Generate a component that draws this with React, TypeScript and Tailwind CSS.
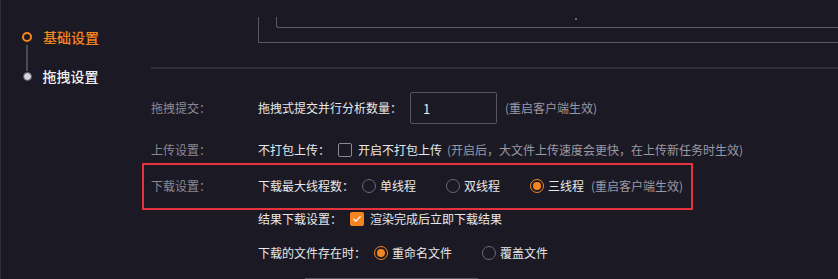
import React from 'react';

const Radio: React.FC<{ checked?: boolean }> = ({ checked }) =>
  checked ? (
    <span className="flex h-[14px] w-[14px] shrink-0 items-center justify-center rounded-full border-[1.5px] border-[#f5861f]">
      <span className="h-[8px] w-[8px] rounded-full bg-[#f5861f]" />
    </span>
  ) : (
    <span className="h-[14px] w-[14px] shrink-0 rounded-full border border-[#6a6975]" />
  );

const Checkbox: React.FC<{ checked?: boolean }> = ({ checked }) =>
  checked ? (
    <span className="flex h-[14px] w-[14px] shrink-0 items-center justify-center rounded-[2px] bg-[#f5861f]">
      <svg viewBox="0 0 12 12" className="h-[10px] w-[10px]" fill="none" stroke="#fff" strokeWidth="1.6">
        <path d="M2.2 6.2 4.8 8.6 9.8 3.2" strokeLinecap="round" strokeLinejoin="round" />
      </svg>
    </span>
  ) : (
    <span className="h-[14px] w-[14px] shrink-0 rounded-[2px] border border-[#8a8995]" />
  );

const RadioOption: React.FC<{ label: string; checked?: boolean }> = ({ label, checked }) => (
  <div className="flex items-center gap-[4px]">
    <Radio checked={checked} />
    <span className="text-[#e8e8ea]">{label}</span>
  </div>
);

export default function App() {
  return (
    <div
      className="flex h-[279px] w-[838px] overflow-hidden border-l border-[#2f2e3a] bg-[#1b1a24] text-[12px] leading-none"
      style={{ fontFamily: '"Noto Sans CJK SC", "Microsoft YaHei", sans-serif' }}
    >
      {/* side nav */}
      <div className="w-[150px] shrink-0 pt-[29px]">
        <div className="flex h-[16px] items-center">
          <span className="ml-[21px] h-[10px] w-[10px] rounded-full border-2 border-[#f5861f]" />
          <span className="ml-[11px] text-[14px] font-medium text-[#f5861f]">基础设置</span>
        </div>
        <div className="ml-[25px] h-[26px] w-[2px] bg-[#4a4955]" />
        <div className="flex h-[10px] items-center">
          <span className="ml-[21.5px] h-[9px] w-[9px] rounded-full border border-[#55545f] bg-[#d4d4d8]" />
          <span className="ml-[11px] text-[14px] font-medium text-[#f0f0f2]">拖拽设置</span>
        </div>
      </div>

      {/* content */}
      <div className="flex-1">
        <div className="pl-[107px] pt-[17px]">
          <div className="relative h-[26px] border-b border-l border-[#5a5966] pl-[17px]">
            <div className="h-[11px] rounded-bl-[3px] border-b border-l border-[#5a5966]" />
            <span className="absolute left-[316px] top-[1px] h-[2px] w-[2px] bg-[#6a6975]" />
          </div>
        </div>

        <div className="mt-[24px] h-[2px] bg-[#302f3b]" />

        {/* row 1 */}
        <div className="mt-[23px] flex h-[32px] items-center">
          <span className="w-[107px] text-[#8a8995]">拖拽提交：</span>
          <span className="mr-[8px] text-[#e8e8ea]">拖拽式提交并行分析数量：</span>
          <div className="flex h-[32px] w-[87px] items-center rounded-[2px] border border-[#55545f] pl-[12px] text-[13px] text-[#e8e8ea]">
            1
          </div>
          <span className="ml-[8px] text-[#9a99a4]">(重启客户端生效)</span>
        </div>

        {/* row 2 */}
        <div className="mt-[16px] flex h-[20px] items-center">
          <span className="w-[107px] text-[#8a8995]">上传设置：</span>
          <span className="mr-[8px] text-[#e8e8ea]">不打包上传：</span>
          <Checkbox />
          <span className="ml-[6px] text-[#e8e8ea]">开启不打包上传</span>
          <span className="ml-[5px] text-[#9a99a4]">(开启后，大文件上传速度会更快，在上传新任务时生效)</span>
        </div>

        {/* row 3 */}
        <div className="-ml-[9px] mt-[3px] flex h-[47px] w-[551px] items-center border-2 border-[#e5323c] pl-[7px] pb-[1px]">
          <span className="w-[107px] text-[#8a8995]">下载设置：</span>
          <span className="mr-[8px] text-[#e8e8ea]">下载最大线程数：</span>
          <div className="flex items-center gap-[30px]">
            <RadioOption label="单线程" />
            <RadioOption label="双线程" />
            <div className="flex items-center">
              <RadioOption label="三线程" checked />
              <span className="ml-[7px] text-[#9a99a4]">(重启客户端生效)</span>
            </div>
          </div>
        </div>

        {/* row 4 */}
        <div className="flex h-[18px] items-center">
          <span className="w-[107px]" />
          <span className="mr-[8px] text-[#e8e8ea]">结果下载设置：</span>
          <Checkbox checked />
          <span className="ml-[6px] text-[#e8e8ea]">渲染完成后立即下载结果</span>
        </div>

        {/* row 5 */}
        <div className="mt-[15px] flex h-[20px] items-center">
          <span className="w-[107px]" />
          <span className="mr-[8px] text-[#e8e8ea]">下载的文件存在时：</span>
          <div className="flex items-center gap-[30px]">
            <RadioOption label="重命名文件" checked />
            <RadioOption label="覆盖文件" />
          </div>
        </div>

        <div className="ml-[154px] mt-[15px] h-px w-[173px] bg-[#55545f]" />
      </div>
    </div>
  );
}
